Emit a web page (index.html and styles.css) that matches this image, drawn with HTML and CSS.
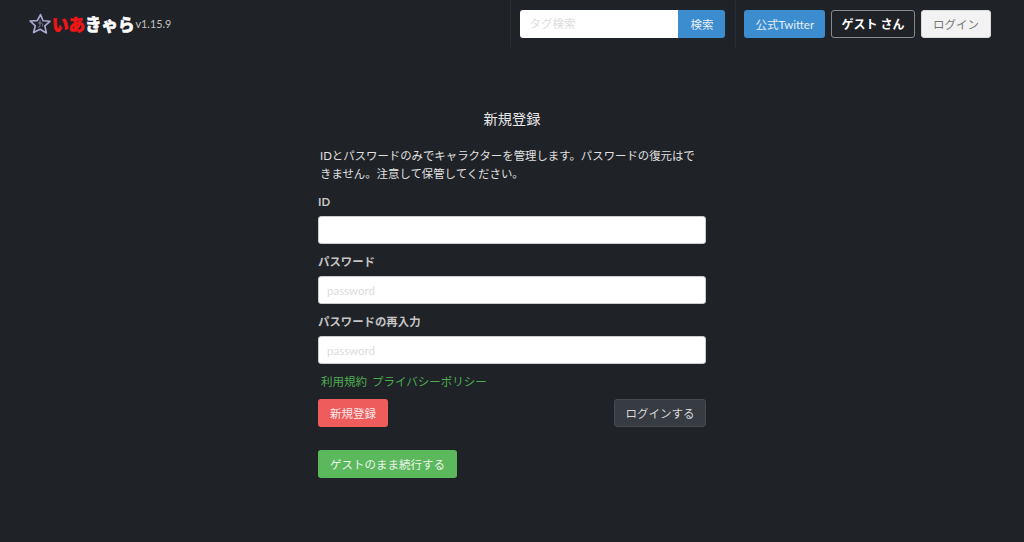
FILE: index.html
```html
<!DOCTYPE html>
<html lang="ja">
<head>
<meta charset="utf-8">
<title>新規登録</title>
<link rel="stylesheet" href="styles.css">
</head>
<body>
<header class="navbar">
  <a class="brand" href="#">
    <svg class="star" width="22" height="22" viewBox="0 0 21 21" aria-hidden="true">
      <path d="M11 1.5 13.4 7.4 20 7.9 15.1 12.3 16.6 19 10.6 15.6 4.4 18.6 6 12.2 1 7.6 7.9 7.2Z" fill="none" stroke="#aaa8d0" stroke-width="1.6" stroke-linejoin="round"/>
      <path d="M8.5 9.5h4M10.5 6.5v6l-2 1.5M13 10v3" fill="none" stroke="#77759a" stroke-width="1"/>
    </svg>
    <span class="logo"><span class="logo-red">いあ</span>きゃら</span>
    <span class="version">v1.15.9</span>
  </a>
  <form class="search">
    <input class="search-input" type="text" placeholder="タグ検索">
    <button class="btn btn-blue search-btn" type="button">検索</button>
  </form>
  <nav class="nav-actions">
    <a class="btn btn-blue btn-twitter" href="#">公式Twitter</a>
    <a class="btn btn-guest" href="#">ゲスト さん</a>
    <a class="btn btn-light" href="#">ログイン</a>
  </nav>
</header>
<main class="panel">
  <h1 class="title">新規登録</h1>
  <p class="lead">IDとパスワードのみでキャラクターを管理します。パスワードの復元はできません。注意して保管してください。</p>
  <label class="label">ID</label>
  <input class="field" type="text">
  <label class="label">パスワード</label>
  <input class="field" type="password" placeholder="password">
  <label class="label">パスワードの再入力</label>
  <input class="field" type="password" placeholder="password">
  <div class="links"><a href="#">利用規約</a><a href="#">プライバシーポリシー</a></div>
  <div class="actions">
    <a class="btn btn-red" href="#">新規登録</a>
    <a class="btn btn-dark" href="#">ログインする</a>
  </div>
  <a class="btn btn-green" href="#">ゲストのまま続行する</a>
</main>
</body>
</html>
```
FILE: styles.css
```css
* { box-sizing: border-box; }
html, body { margin: 0; padding: 0; }
body {
  background: #1f2227;
  color: #e4e4e4;
  font-family: "Lato", "Noto Sans CJK JP", sans-serif;
  font-size: 12px;
  height: 542px;
  overflow: hidden;
}
a { text-decoration: none; }
.navbar {
  display: flex;
  align-items: stretch;
  height: 47px;
  padding: 0 33px 0 29px;
}
.brand { display: flex; align-items: center; }
.star { flex: none; }
.logo {
  color: #fff;
  font-family: "Noto Sans CJK JP", sans-serif;
  font-weight: 900;
  font-size: 16.5px;
  -webkit-text-stroke: 0.5px currentColor;
  margin-left: 1px;
  line-height: 20px;
}
.logo-red { color: #f01616; }
.version {
  color: #c2c2c2;
  font-size: 10.8px;
  margin-left: 1px;
}
.search {
  display: flex;
  align-items: center;
  margin-left: auto;
  padding-left: 9px;
  border-left: 1px solid #2a2e34;
}
.search-input {
  width: 158px;
  height: 28px;
  border: 0;
  border-radius: 3px 0 0 3px;
  background: #fff;
  padding: 0 9px;
  font: 11.5px "Lato", "Noto Sans CJK JP", sans-serif;
}
.search-input::placeholder, .field::placeholder { color: #dcdcdc; opacity: 1; }
.btn {
  display: inline-flex;
  align-items: center;
  justify-content: center;
  height: 28px;
  padding: 0 11px;
  border-radius: 3px;
  border: 1px solid transparent;
  font-family: "Lato", "Noto Sans CJK JP", sans-serif;
  font-size: 11.5px;
  white-space: nowrap;
}
.search-btn { border-radius: 0 3px 3px 0; width: 47px; padding: 0; }
.btn-blue { background: #3c8dd0; color: #e6eef5; }
.btn-twitter { padding: 0 10px; }
.nav-actions {
  display: flex;
  align-items: center;
  gap: 6px;
  margin-left: 10px;
  padding-left: 8px;
  border-left: 1px solid #2a2e34;
}
.btn-guest { background: #1f2227; border-color: #8a8a8a; color: #fff; font-weight: 700; font-size: 12px; padding: 0 9.5px; }
.btn-light { background: #f2f2f2; color: #777; border-color: #ddd; }
.panel {
  display: flex;
  flex-direction: column;
  align-items: flex-start;
  width: 388px;
  margin: 62px auto 0;
}
.title {
  align-self: stretch;
  margin: 0 0 18px;
  text-align: center;
  font-size: 14.2px;
  font-weight: 400;
  line-height: 20px;
  color: #e8e8e8;
}
.lead {
  margin: 0 0 12px;
  padding: 0 2px;
  font-size: 11.4px;
  line-height: 17.5px;
  color: #e0e0e0;
}
.label {
  font-size: 11.4px;
  font-weight: 700;
  line-height: 16px;
  color: #c4c4c4;
  margin-bottom: 6px;
}
.field {
  width: 100%;
  height: 28px;
  border: 1px solid #ccc;
  border-radius: 3px;
  background: #fff;
  padding: 0 8px;
  font: 11.5px "Lato", "Noto Sans CJK JP", sans-serif;
  margin-bottom: 10px;
}
.links {
  display: flex;
  gap: 5px;
  padding: 0 3px;
  margin-top: -1px;
  line-height: 18px;
  font-size: 11.5px;
}
.links a { color: #4cad50; }
.actions {
  align-self: stretch;
  display: flex;
  justify-content: space-between;
  margin-top: 8px;
  margin-bottom: 23px;
}
.btn-red { background: #ee5c5c; color: #f7e9e9; }
.btn-dark { background: #373b42; border-color: #474b52; color: #d8d8d8; padding: 0 10.5px; }
.btn-green { background: #5cb85c; color: #e8f3e8; }
```
